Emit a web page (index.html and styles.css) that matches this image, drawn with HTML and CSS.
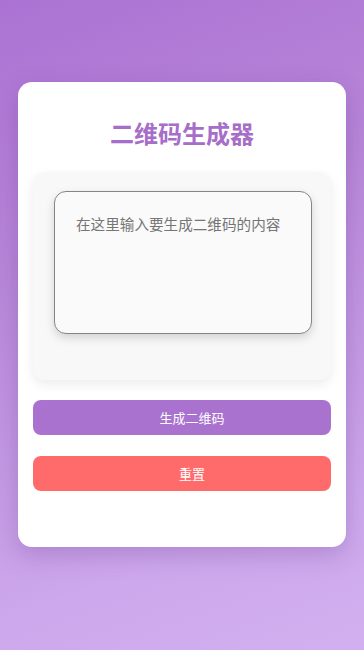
FILE: index.html
```html
<!DOCTYPE html>
<html lang="zh-CN">
  <head>
    <meta charset="UTF-8" />
    <title>二维码生成器</title>
    <link rel="stylesheet" href="styles.css">
  </head>
  <body>
    <!-- 카드 -->
    <div class="card">
      <h1 class="title">二维码生成器</h1>
      <!-- 입력박스 -->
      <div class="input-box">
        <textarea class="txt" placeholder="在这里输入要生成二维码的内容"></textarea>
      </div>
      <button class="btn btn-make">生成二维码</button>
      <button class="btn btn-reset">重置</button>
    </div>
  </body>
</html>
```

FILE: styles.css
```css
/* 초기화 */
html,
body {
  margin: 0;
  padding: 0;
}

body {
  min-height: 650px;
  box-sizing: border-box;
  padding: 82px 18px 0;
  background: linear-gradient(160deg, #ab72d3 0%, #b887d9 35%, #cda8ec 80%, #d2b0ef 100%);
  font-family: "Noto Sans CJK SC", "Noto Sans", sans-serif;
}

/* 카드 */
.card {
  background-color: #fff;
  border-radius: 14px;
  padding: 35px 15px 56px;
  box-shadow: 0 8px 24px rgba(90, 40, 130, 0.25);
}

.title {
  margin: 0 0 23px;
  text-align: center;
  font-size: 24px;
  line-height: 32px;
  font-weight: bold;
  color: #a66dc9;
}

/* 입력박스 */
.input-box {
  background-color: #f8f8f8;
  border-radius: 12px;
  padding: 19px 19px 46px 21px;
  box-shadow: 0 4px 12px rgba(0, 0, 0, 0.08);
}

.txt {
  display: block;
  box-sizing: border-box;
  width: 100%;
  height: 143px;
  padding: 20px 10px 20px 21px;
  border: 1px solid #858585;
  border-radius: 12px;
  background-color: #fafafa;
  font-family: inherit;
  font-size: 14.6px;
  line-height: 24px;
  color: #555;
  resize: none;
  outline: none;
  box-shadow: 0 4px 10px rgba(0, 0, 0, 0.15);
}

.txt::placeholder {
  color: #757575;
}

/* 버튼 */
.btn {
  display: block;
  width: 100%;
  height: 35px;
  margin-top: 20px;
  padding: 0 0 0 20px;
  border: 0;
  border-radius: 8px;
  font-family: inherit;
  font-size: 13px;
  color: #fff;
  cursor: pointer;
}

.btn-make {
  background-color: #a972cf;
}

.btn-reset {
  margin-top: 21px;
  background-color: #ff6b6b;
}
```
